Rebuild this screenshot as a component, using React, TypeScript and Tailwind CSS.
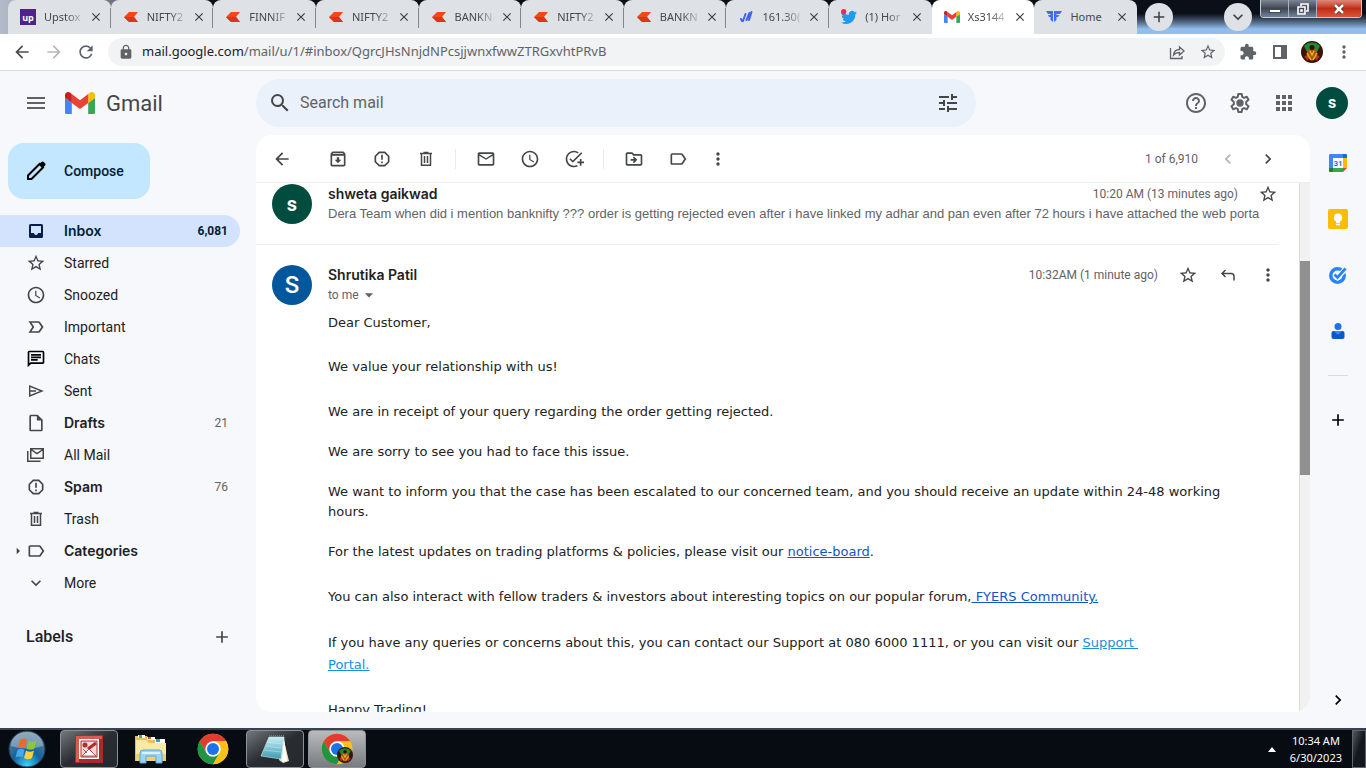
import type { ReactNode } from "react";
import type { IconType } from "react-icons";
import {
  MdAccessTime, MdAdd, MdAddTask, MdApps, MdArrowBack, MdArrowDropDown, MdArrowForward, MdArrowRight,
  MdChevronLeft, MdChevronRight, MdClose, MdExpandMore, MdExtension, MdHelpOutline,
  MdLabelImportantOutline, MdLabelOutline, MdLock, MdMailOutline, MdMenu, MdMoreVert, MdOutlineArchive,
  MdOutlineChat, MdOutlineDriveFileMove, MdOutlineInsertDriveFile, MdRefresh,
  MdReportGmailerrorred, MdSearch, MdStarBorder, MdTune,
} from "react-icons/md";

type IconProps = { className?: string };

/* ---------- brand icons ---------- */

function GmailLogo({ className }: IconProps) {
  return (
    <svg viewBox="52 42 88 66" className={className}>
      <path fill="#4285f4" d="M58 108h14V74L52 59v43c0 3.320 2.690 6 6 6" />
      <path fill="#34a853" d="M120 108h14c3.320 0 6-2.690 6-6V59l-20 15" />
      <path fill="#fbbc04" d="M120 48v26l20-15v-8c0-7.420-8.470-11.650-14.400-7.200" />
      <path fill="#ea4335" d="M72 74V48l24 18 24-18v26L96 92" />
      <path fill="#c5221f" d="M52 51v8l20 15V48l-5.600-4.200c-5.940-4.450-14.400-.22-14.400 7.200" />
    </svg>
  );
}

function UpstoxIcon() {
  return <span className="grid size-4 place-items-center bg-[#512289] font-['Open_Sans',sans-serif] text-[9px] leading-none font-bold text-white">up</span>;
}

function KiteIcon() {
  return (
    <svg viewBox="0 0 16 16" className="size-4">
      <path fill="#f6461a" d="M1 8 6 3h9l-4 5 4 5H6z" />
      <path fill="#d9361a" d="m11 8 4 5H6L1 8z" />
    </svg>
  );
}

function WaveIcon() {
  return (
    <svg viewBox="0 0 16 16" className="size-4" fill="none" stroke="#4263eb" strokeWidth="2" strokeLinecap="round">
      <path d="M3 10l1 2M5 12 7.500 5M8.500 11l3-7M11 11l2.500-8" />
    </svg>
  );
}

function TwitterIcon() {
  return (
    <svg viewBox="0 0 24 24" className="size-4">
      <path fill="#1d9bf0" d="M23.900 5.200c-.9.400-1.800.7-2.800.8 1-.6 1.800-1.600 2.200-2.700-1 .6-2 1-3.100 1.200a4.900 4.900 0 0 0-8.400 4.500C7.700 8.800 4.100 6.900 1.700 3.900a4.900 4.900 0 0 0 1.500 6.600c-.8 0-1.600-.2-2.200-.6a4.900 4.900 0 0 0 3.900 4.900c-.7.200-1.500.2-2.200.1.600 2 2.400 3.400 4.600 3.400A9.900 9.900 0 0 1 0 20.300a14 14 0 0 0 21.500-12.400c1-.7 1.800-1.600 2.400-2.700z" />
      <circle cx="4" cy="4" r="4" fill="#f4245e" />
    </svg>
  );
}

function FyersIcon() {
  return (
    <svg viewBox="0 0 16 16" className="size-4">
      <path fill="#3f6df0" d="M0 2h7v11L4.500 11V8H3L2 6h2.500V5H2zM16 2H8v11l2.500-2V8H12l1.500-2h-3V5H14z" />
    </svg>
  );
}

function ChromeLogo({ className }: IconProps) {
  return (
    <svg viewBox="0 0 48 48" className={className}>
      <circle cx="24" cy="24" r="23" fill="#fbc116" />
      <path fill="#e33b2e" d="M4.100 12.500A23 23 0 0 1 43.900 12.500H24L14 29.800z" />
      <path fill="#229342" d="M4.100 12.500A23 23 0 0 0 24 47l10-17.250H14z" />
      <path fill="#fbc116" d="M43.900 12.500A23 23 0 0 1 24 47l10-17.250a11.500 11.500 0 0 0 0-11.500L24 12.500z" />
      <circle cx="24" cy="24" r="11.500" fill="#fff" />
      <circle cx="24" cy="24" r="9" fill="#1a73e8" />
    </svg>
  );
}

function ProfilePicture({ className }: IconProps) {
  return (
    <svg viewBox="0 0 22 22" className={className}>
      <circle cx="11" cy="11" r="11" fill="#3a1408" />
      <path d="M3 5a11 11 0 0 1 16 0l-3 6H6z" fill="#1f8a2f" />
      <path d="M6 12c.5-4 3-5 5-5s4.500 1 5 5l1 4-6 4-6-4z" fill="#a85a18" />
      <circle cx="11" cy="6.500" r="2.500" fill="#2a1409" />
      <path d="m6 12 4 7M16 12l-4 7M9 10l2 4 2-4" stroke="#f0b41c" strokeWidth="1.400" fill="none" />
      <path d="M4 15l3 4M18 15l-3 4" stroke="#c42a1c" strokeWidth="2" />
    </svg>
  );
}

/* ---------- mail icons ---------- */

function Inbox({ className }: IconProps) {
  return (
    <svg viewBox="0 0 20 20" className={className}>
      <path
        fill="currentColor"
        fillRule="evenodd"
        d="M4.500 3h11A1.500 1.500 0 0 1 17 4.500v11a1.500 1.500 0 0 1-1.500 1.500h-11A1.500 1.500 0 0 1 3 15.500v-11A1.500 1.500 0 0 1 4.500 3M5 5v7h3a2 2 0 0 0 4 0h3V5z"
      />
    </svg>
  );
}

function Trash({ className }: IconProps) {
  return (
    <svg viewBox="0 0 20 20" className={className} fill="none" stroke="currentColor" strokeWidth="1.500">
      <path d="M4 4.500h12M7.500 3.500h5M5.500 4.500v11.750h9V4.500M8.500 7v7M11.500 7v7" />
    </svg>
  );
}

function Send({ className }: IconProps) {
  return (
    <svg viewBox="0 0 20 20" className={className} fill="none" stroke="currentColor" strokeWidth="1.400">
      <path d="M3.700 5v10L16 10zM4 10h6" />
    </svg>
  );
}

function AllMail({ className }: IconProps) {
  return (
    <svg viewBox="0 0 20 20" className={className} fill="none" stroke="currentColor" strokeWidth="1.500">
      <path d="M4.750 3.750h12.500v9.500H4.750zM5 4.500l6 4 6-4M1.750 6v10.250H14.500" />
    </svg>
  );
}

function Reply({ className }: IconProps) {
  return (
    <svg viewBox="0 0 20 20" className={className} fill="none" stroke="currentColor" strokeWidth="1.500">
      <path d="M7.500 5 4 8.500 7.500 12M4.250 8.500H13a3 3 0 0 1 3 3v4" />
    </svg>
  );
}

function Pencil({ className }: IconProps) {
  return (
    <svg viewBox="0 0 24 24" className={className}>
      <path fill="none" stroke="currentColor" strokeWidth="2" d="M4 20v-3.500L15.500 5l3.500 3.500L7.500 20z" />
      <path fill="currentColor" d="m15 5 2.500-2c.7-.7 1.500-.7 2.200 0L21 4.300c.7.700.7 1.500 0 2.200L18.500 9z" />
    </svg>
  );
}

function Gear({ className }: IconProps) {
  return (
    <svg viewBox="0 0 24 24" className={className}>
      <path
        fill="none"
        stroke="currentColor"
        strokeWidth="2"
        strokeLinejoin="round"
        d="M10.300 3h3.400l.5 2.900 1.800 1 2.800-1.100 1.700 3-2.300 1.900v2.600l2.300 1.900-1.700 3-2.800-1.100-1.800 1-.5 2.900h-3.400l-.5-2.900-1.800-1-2.800 1.100-1.700-3 2.300-1.900v-2.600L3.500 8.800l1.700-3L8 6.900l1.800-1z"
      />
      <circle cx="12" cy="12" r="3.700" fill="currentColor" />
    </svg>
  );
}

function CalendarApp() {
  return (
    <svg viewBox="0 0 20 20" className="size-5">
      <path fill="#4285f4" d="M2 1h13v4H5v10H1V2a1 1 0 0 1 1-1" />
      <path fill="#1967d2" d="M15 1h3a1 1 0 0 1 1 1v3h-4z" />
      <path fill="#fbbc04" d="M15 5h4v10h-4z" />
      <path fill="#34a853" d="M5 15h10v4H5z" />
      <path fill="#188038" d="M1 15h4v4H2a1 1 0 0 1-1-1z" />
      <path fill="#ea4335" d="M15 15h4l-4 4z" />
      <path fill="#fff" d="M5 5h10v10H5z" />
      <text x="10" y="13" textAnchor="middle" fontSize="8" fontWeight="700" fontFamily="Roboto" fill="#1a73e8">31</text>
    </svg>
  );
}

function KeepApp() {
  return (
    <svg viewBox="0 0 20 20" className="size-5">
      <rect width="20" height="20" rx="2" fill="#fbbc04" />
      <path fill="#fff" d="M10 4.500a4.200 4.200 0 0 0-2 7.900V14h4v-1.600a4.200 4.200 0 0 0-2-7.900M8 14.800h4v1.400H8z" />
    </svg>
  );
}

function TasksApp() {
  return (
    <svg viewBox="0 0 20 20" className="size-5" fill="none">
      <circle cx="9.500" cy="10.500" r="6.700" stroke="#2684fc" strokeWidth="3.500" />
      <path d="m6.500 9.500 3 3L17.500 4" stroke="#fff" strokeWidth="5" />
      <path d="m6.500 9.500 3 3L17.500 3.500" stroke="#2684fc" strokeWidth="2.800" />
    </svg>
  );
}

function ContactsApp() {
  return (
    <svg viewBox="0 0 20 20" className="size-5">
      <circle cx="10" cy="5.500" r="3.500" fill="#1a73e8" />
      <path fill="#0b57d0" d="M3.500 12a2 2 0 0 1 2-2h9a2 2 0 0 1 2 2v4a2 2 0 0 1-2 2h-9a2 2 0 0 1-2-2z" />
      <path fill="#4285f4" d="M6 10h8l-4 4z" />
    </svg>
  );
}

/* ---------- browser chrome ---------- */

const tabs: { title: string; icon: ReactNode; active?: boolean }[] = [
  { title: "Upstox", icon: <UpstoxIcon /> },
  { title: "NIFTY2", icon: <KiteIcon /> },
  { title: "FINNIF", icon: <KiteIcon /> },
  { title: "NIFTY2", icon: <KiteIcon /> },
  { title: "BANKN", icon: <KiteIcon /> },
  { title: "NIFTY2", icon: <KiteIcon /> },
  { title: "BANKN", icon: <KiteIcon /> },
  { title: "161.30(", icon: <WaveIcon /> },
  { title: "(1) Hor", icon: <TwitterIcon /> },
  { title: "Xs3144", icon: <GmailLogo className="w-4" />, active: true },
  { title: "Home", icon: <FyersIcon /> },
];

function TabStrip() {
  return (
    <div className="flex h-[34px] shrink-0 bg-linear-to-b from-[#0b1018] from-40% to-[#93bdec] to-85%">
      <div className="flex w-[1137px] min-w-0 bg-linear-to-r from-[#b4bccb] via-[#6f7480] via-10% to-[#0b0e13] to-18% pl-2">
        {tabs.map((tab, i) => (
          <div
            key={i}
            className={`relative flex min-w-0 flex-1 items-center rounded-t-lg pl-3 ${tab.active ? "bg-white" : "bg-[#dee1e6]"}`}
          >
            <span className="grid w-4 shrink-0 place-items-center">{tab.icon}</span>
            <span className={`ml-2 w-11 shrink-0 font-['Noto_Sans',sans-serif] text-[11px] whitespace-nowrap text-[#45474a] ${tab.title === "Home" ? "" : "mask-r-from-50% mask-r-to-95%"}`}>
              {tab.title}
            </span>
            <button aria-label="Close tab" className="grid size-4 shrink-0 place-items-center text-[#3c4043]">
              <MdClose className="size-3.5" />
            </button>
            {i < 8 && <span className="absolute top-2 right-0 h-5 w-px bg-[#80858c]" />}
          </div>
        ))}
      </div>
      <div className="flex flex-1 items-start">
        <button aria-label="New tab" className="mt-[3px] ml-2 grid size-7 place-items-center rounded-full bg-[#dee1e6] text-[#3c4043]">
          <MdAdd className="size-4.5" />
        </button>
        <button aria-label="Search tabs" className="mt-[3px] ml-auto grid size-7 place-items-center rounded-full bg-[#dee1e6] text-[#3c4043]">
          <MdExpandMore className="size-5" />
        </button>
        <div className="mr-1 ml-2 flex h-[18px] overflow-hidden rounded-b border border-t-0 border-[#c5ccd6]">
          <button aria-label="Minimize" className="grid w-7 place-items-center border-r border-[#aab2bd] bg-linear-to-b from-[#7d8692] via-[#3d4653] to-[#72859d]">
            <span className="mt-1 h-1 w-3 border border-[#454c56] bg-white" />
          </button>
          <button aria-label="Restore" className="grid w-7 place-items-center border-r border-[#aab2bd] bg-linear-to-b from-[#7d8692] via-[#3d4653] to-[#72859d]">
            <svg viewBox="0 0 12 12" className="size-3" fill="none" stroke="#fff" strokeWidth="1.600">
              <path d="M4 3V1h7v7H9M1 4h7v7H1zM4 7h1v1H4z" />
            </svg>
          </button>
          <button aria-label="Close window" className="grid w-11 place-items-center bg-linear-to-b from-[#dd8878] via-[#bf2b12] to-[#d9563a]">
            <svg viewBox="0 0 12 12" className="size-3" fill="none">
              <path d="m2 2 8 8M10 2l-8 8" stroke="#5a2a22" strokeWidth="4" />
              <path d="m2 2 8 8M10 2l-8 8" stroke="#fff" strokeWidth="2.500" />
            </svg>
          </button>
        </div>
      </div>
    </div>
  );
}

function AddressBar() {
  return (
    <div className="flex h-[37px] shrink-0 items-center border-b border-[#dadce0] bg-white pr-2.5 pl-3 text-[#5f6368]">
      <div className="mr-3 flex gap-3">
        <button aria-label="Back"><MdArrowBack className="size-5 text-[#4a4d51]" /></button>
        <button aria-label="Forward"><MdArrowForward className="size-5 text-[#b5b8bc]" /></button>
        <button aria-label="Reload"><MdRefresh className="size-5" /></button>
      </div>
      <div className="flex h-7 flex-1 items-center rounded-full bg-[#f1f3f4] pr-2 pl-2.5">
        <MdLock className="mr-2 size-4" />
        <span className="flex-1 font-['Noto_Sans',sans-serif] text-[13px]">
          <span className="text-[#202124]">mail.google.com</span>/mail/u/1/#inbox/QgrcJHsNnjdNPcsjjwnxfwwZTRGxvhtPRvB
        </span>
        <button aria-label="Share" className="mr-3">
          <svg viewBox="0 0 20 20" className="size-5" fill="none" stroke="currentColor" strokeWidth="1.300">
            <path d="M3.500 6v10.500H15V14M6.500 13c.5-4 2.500-5.500 6-5.500V5l4.500 4-4.500 4v-2.500c-3 0-4.500.8-6 2.500z" />
          </svg>
        </button>
        <button aria-label="Bookmark"><MdStarBorder className="size-[18px]" /></button>
      </div>
      <div className="ml-[11px] flex gap-2">
        <button aria-label="Extensions" className="grid size-6 place-items-center"><MdExtension className="size-[18px]" /></button>
        <button aria-label="Side panel" className="grid size-6 place-items-center">
          <svg viewBox="0 0 16 16" className="size-4">
            <path fill="none" stroke="currentColor" strokeWidth="2" d="M2 2h12v12H2z" />
            <path fill="currentColor" d="M9 2h5v12H9z" />
          </svg>
        </button>
        <button aria-label="Profile" className="grid size-6 place-items-center"><ProfilePicture className="size-[22px]" /></button>
        <button aria-label="Chrome menu" className="grid size-6 place-items-center"><MdMoreVert className="size-5" /></button>
      </div>
    </div>
  );
}

/* ---------- gmail ---------- */

function Header() {
  return (
    <header className="flex h-16 shrink-0 items-center text-[#5f6368]">
      <div className="flex w-64 shrink-0 items-center pl-6">
        <button aria-label="Main menu"><MdMenu className="size-6" /></button>
        <a href="#inbox" className="ml-[17px] flex items-center gap-[11px]">
          <GmailLogo className="w-[30px]" />
          <span className="text-[22px] text-[#444746]">Gmail</span>
        </a>
      </div>
      <div className="flex h-12 w-[720px] items-center rounded-full bg-[#eaf1fb] px-3 text-[#444746]">
        <button aria-label="Search"><MdSearch className="size-6" /></button>
        <input aria-label="Search mail" placeholder="Search mail" className="ml-2 flex-1 bg-transparent text-base outline-none placeholder:text-[#5f6368]" />
        <button aria-label="Show search options" className="mr-1"><MdTune className="size-6" /></button>
      </div>
      <div className="ml-auto flex items-center gap-5 pr-[18px]">
        <button aria-label="Support"><MdHelpOutline className="size-6" /></button>
        <button aria-label="Settings"><Gear className="size-6" /></button>
        <button aria-label="Google apps"><MdApps className="size-6" /></button>
        <button aria-label="Account" className="grid size-8 place-items-center rounded-full bg-[#004d40] text-base font-bold text-white">s</button>
      </div>
    </header>
  );
}

type NavEntry = { label: string; icon: IconType | typeof Trash; count?: string; bold?: boolean; active?: boolean; dark?: boolean; expandable?: boolean };

const folders: NavEntry[] = [
  { label: "Inbox", icon: Inbox, count: "6,081", bold: true, active: true },
  { label: "Starred", icon: MdStarBorder },
  { label: "Snoozed", icon: MdAccessTime },
  { label: "Important", icon: MdLabelImportantOutline },
  { label: "Chats", icon: MdOutlineChat, dark: true },
  { label: "Sent", icon: Send },
  { label: "Drafts", icon: MdOutlineInsertDriveFile, count: "21", bold: true },
  { label: "All Mail", icon: AllMail },
  { label: "Spam", icon: MdReportGmailerrorred, count: "76", bold: true },
  { label: "Trash", icon: Trash },
  { label: "Categories", icon: MdLabelOutline, bold: true, expandable: true },
  { label: "More", icon: MdExpandMore },
];

function Sidebar() {
  return (
    <aside className="w-64 shrink-0 pt-2 text-sm text-[#202124]">
      <button className="ml-2 flex h-14 w-[142px] items-center gap-4 rounded-2xl bg-[#c2e7ff] pl-4 font-medium text-[#001d35]">
        <Pencil className="size-6 text-black" />
        Compose
      </button>
      <nav className="mt-4 mr-4">
        {folders.map((f) => (
          <a
            key={f.label}
            href={`#${f.label.toLowerCase()}`}
            className={`flex h-8 items-center rounded-r-full pr-3 pl-[26px] ${f.active ? "bg-[#d3e3fd] text-[#001d35]" : ""}`}
          >
            {f.expandable && <MdArrowRight className="-ml-4 size-4 text-[#444746]" />}
            <f.icon className={`size-5 ${f.dark ? "text-black" : f.active ? "text-[#041e49]" : "text-[#444746]"}`} />
            <span className={`ml-[18px] flex-1 ${f.bold ? "font-[Inter,sans-serif] font-semibold" : ""}`}>{f.label}</span>
            <span className={`text-xs ${f.active ? "font-bold" : "text-[#5f6368]"}`}>{f.count}</span>
          </a>
        ))}
      </nav>
      <div className="mt-[26px] mr-6 flex items-center justify-between pl-[26px]">
        <h2 className="text-base font-medium">Labels</h2>
        <button aria-label="Create new label"><MdAdd className="size-5 text-[#444746]" /></button>
      </div>
    </aside>
  );
}

function Divider() {
  return <span className="mr-5 ml-[19px] h-5 w-px bg-[#e8eaed]" />;
}

function Tool({ label, icon: Icon, className = "" }: { label: string; icon: IconType | typeof Trash; className?: string }) {
  return (
    <button aria-label={label} className={className}>
      <Icon className="size-5" />
    </button>
  );
}

function MailToolbar() {
  return (
    <div className="flex h-12 shrink-0 items-center border-b border-[#eceff1] px-4 text-[#444746]">
      <Tool label="Back to inbox" icon={MdArrowBack} className="mr-9" />
      <div className="flex gap-6">
        <Tool label="Archive" icon={MdOutlineArchive} />
        <Tool label="Report spam" icon={MdReportGmailerrorred} />
        <Tool label="Delete" icon={Trash} />
      </div>
      <Divider />
      <div className="flex gap-6">
        <Tool label="Mark as unread" icon={MdMailOutline} />
        <Tool label="Snooze" icon={MdAccessTime} />
        <Tool label="Add to tasks" icon={MdAddTask} />
      </div>
      <Divider />
      <div className="flex gap-6">
        <Tool label="Move to" icon={MdOutlineDriveFileMove} />
        <Tool label="Labels" icon={MdLabelOutline} />
      </div>
      <Tool label="More" icon={MdMoreVert} className="ml-5" />
      <div className="mr-4 ml-auto flex items-center gap-5">
        <span className="text-xs text-[#5f6368]">1 of 6,910</span>
        <Tool label="Newer" icon={MdChevronLeft} className="text-[#b0b3b6]" />
        <Tool label="Older" icon={MdChevronRight} />
      </div>
    </div>
  );
}

function Thread() {
  return (
    <div className="min-w-0 flex-1 overflow-hidden pr-[21px]">
      <article className="flex h-[62px] gap-4 border-b border-[#eceff1] pt-px pl-4">
        <div className="grid size-10 shrink-0 place-items-center rounded-full bg-[#004d40] text-xl font-bold text-white">s</div>
        <div className="min-w-0 flex-1">
          <div className="flex h-5 items-center">
            <h3 className="flex-1 font-[Inter,sans-serif] text-sm font-semibold text-[#1f1f1f]">shweta gaikwad</h3>
            <span className="mr-5 text-xs text-[#5f6368]">10:20 AM (13 minutes ago)</span>
            <button aria-label="Star" className="text-[#444746]"><MdStarBorder className="size-5" /></button>
          </div>
          <p className="font-['Liberation_Sans',sans-serif] text-[13px] leading-5 whitespace-nowrap text-[#5f6368]">
            Dera Team when did i mention banknifty ??? order is getting rejected even after i have linked my adhar and pan even after 72 hours i have attached the web porta
          </p>
        </div>
      </article>
      <article className="flex gap-4 pt-5 pl-4">
        <div className="grid size-10 shrink-0 place-items-center rounded-full bg-[#01579b] text-2xl font-medium text-white">S</div>
        <div className="min-w-0 flex-1">
          <div className="flex h-5 items-center text-[#444746]">
            <h3 className="flex-1 font-[Inter,sans-serif] text-sm font-semibold text-[#1f1f1f]">Shrutika Patil</h3>
            <span className="mr-5 text-xs text-[#5f6368]">10:32AM (1 minute ago)</span>
            <Tool label="Star" icon={MdStarBorder} className="mr-5" />
            <Tool label="Reply" icon={Reply} className="mr-5" />
            <Tool label="More" icon={MdMoreVert} />
          </div>
          <button className="flex h-5 items-center text-xs text-[#5f6368]">
            to me <MdArrowDropDown className="size-5" />
          </button>
          <div className="mt-2 font-['DejaVu_Sans',sans-serif] text-[13px] leading-5 whitespace-nowrap text-[#222]">
            <p>Dear Customer,</p>
            <p className="mt-6">We value your relationship with us!</p>
            <p className="mt-[25px]">We are in receipt of your query regarding the order getting rejected.</p>
            <p className="mt-5">We are sorry to see you had to face this issue.</p>
            <p className="mt-5">
              We want to inform you that the case has been escalated to our concerned team, and you should receive an update within 24-48 working
              <br />
              hours.
            </p>
            <p className="mt-5">
              For the latest updates on trading platforms &amp; policies, please visit our <a href="#notice-board" className="text-[#1155cc] underline">notice-board</a>.
            </p>
            <p className="mt-[25px]">
              You can also interact with fellow traders &amp; investors about interesting topics on our popular forum,
              <a href="#community" className="text-[#1155cc] underline">&nbsp;FYERS Community.</a>
            </p>
            <p className="mt-[25px] leading-[22px]">
              If you have any queries or concerns about this, you can contact our Support at 080 6000 1111, or you can visit our{" "}
              <a href="#support" className="text-[#188fe0] underline">Support&nbsp;<br />Portal.</a>
            </p>
            <p className="mt-6">Happy Trading!</p>
          </div>
        </div>
      </article>
    </div>
  );
}

function SidePanel() {
  return (
    <aside className="flex w-14 shrink-0 flex-col items-center pt-[18px]">
      <div className="flex flex-col gap-9">
        <button aria-label="Calendar"><CalendarApp /></button>
        <button aria-label="Keep"><KeepApp /></button>
        <button aria-label="Tasks"><TasksApp /></button>
        <button aria-label="Contacts"><ContactsApp /></button>
      </div>
      <span className="mt-[34px] h-px w-5 bg-[#dadce0]" />
      <button aria-label="Get add-ons" className="mt-[34px]"><MdAdd className="size-5" /></button>
      <button aria-label="Hide side panel" className="mt-auto mb-[18px]"><MdChevronRight className="size-5" /></button>
    </aside>
  );
}

/* ---------- taskbar ---------- */

function StartOrb() {
  return (
    <svg viewBox="0 0 38 38" className="size-[38px]">
      <defs>
        <radialGradient id="orb" cx="50%" cy="95%" r="90%">
          <stop offset="0" stopColor="#3fd0ff" />
          <stop offset=".45" stopColor="#12639c" />
          <stop offset="1" stopColor="#62839c" />
        </radialGradient>
      </defs>
      <circle cx="19" cy="19" r="18" fill="url(#orb)" stroke="#26394a" />
      <path d="M3 16a16 14 0 0 1 32 0q-16 5-32 0" fill="#fff" opacity=".3" />
      <path d="M12 10q4-3 7 0l-2 8q-4-2-7 0z" fill="#f0682a" />
      <path d="M20.500 10.500q4 2.500 8 0l-2 8q-4 2.500-8 0z" fill="#8cc540" />
      <path d="M9.500 20q3.500-2.500 7 0l-2 7.500q-3.500-2-7 0z" fill="#4aa8e8" />
      <path d="M18 20.500q4 2.500 8 0l-2 7.500q-4 2.500-8 0z" fill="#fdd13a" />
    </svg>
  );
}

function PictureManagerIcon() {
  return (
    <svg viewBox="0 0 28 28" className="size-7">
      <path fill="#a92a2a" d="M0 0h28v28H0z" />
      <path fill="#d85a52" d="M1 1h26v3H1zM1 1h3v26H1z" />
      <path fill="#fff" d="M4 4h20v20H4z" />
      <path fill="#f4d6d2" d="M6 6h16v16H6z" />
      <path stroke="#b32d2d" strokeWidth="1" fill="none" d="M6 6h16v16H6z" />
      <circle cx="10" cy="10" r="2.500" fill="#b32d2d" />
      <path stroke="#b32d2d" strokeWidth="3" d="m13 14 8-6" />
      <path fill="#fff" stroke="#b32d2d" strokeWidth=".8" d="m7 21 7-7 7 7zM8 14l4 4" />
    </svg>
  );
}

function ExplorerIcon() {
  return (
    <svg viewBox="0 0 34 32" className="h-8 w-[34px]">
      <path fill="#e2c163" d="M1 3h12l2 3h15v4h2v18H1z" />
      <path fill="#fff" d="M4 2h7v3H4zM13 4h8v3h-8zM21 6h10v4H21z" />
      <path fill="#4caf50" d="M5 2h3v3H5z" />
      <path fill="#d9513c" d="M14 4h3v2h-3z" />
      <path fill="#3b98d8" d="M22 6h4v3h-4z" />
      <path fill="#fae9a4" d="M2 7h10l3 3h17v18H2z" />
      <path fill="#e9d07b" d="M2 21h30v7H2z" />
      <path fill="#9bd5f4" stroke="#5aa7d6" d="M6 30V20q0-3 3-3h16q3 0 3 3v10h-6v-7H12v7z" />
      <path fill="#d8f2ff" d="M8 19h18v2H8z" />
    </svg>
  );
}

function NotepadIcon() {
  return (
    <svg viewBox="0 0 32 30" className="h-[30px] w-8">
      <defs>
        <linearGradient id="pad" x1="0" y1="0" x2="0" y2="1">
          <stop offset="0" stopColor="#c9eef4" />
          <stop offset="1" stopColor="#3a9bb0" />
        </linearGradient>
      </defs>
      <path fill="#e8e2c8" d="m24 3 6 24-6 2-4-3z" />
      <path fill="#fff" d="m25 3 3 24-5 1z" />
      <path fill="url(#pad)" stroke="#d5ecef" strokeWidth=".6" d="M10 3h15l-3 22-20-3z" />
      <path stroke="#6d7c80" strokeDasharray="1 1" strokeWidth="2" d="M10 2h15" />
      <path stroke="#e6fbff" strokeWidth=".6" opacity=".6" d="m8 8 15 2M7 12l15 2M5 16l17 2" />
    </svg>
  );
}

function Taskbar() {
  const windowClass = "grid h-[38px] w-[58px] place-items-center rounded-sm border border-[#8d9196]";
  return (
    <footer className="flex h-10 shrink-0 items-center border-t-2 border-[#39434f] bg-[#070c12] pl-2 font-['Noto_Sans',sans-serif]">
      <button aria-label="Start"><StartOrb /></button>
      <button aria-label="Picture Manager" className={`ml-3.5 ${windowClass} bg-linear-to-br from-[#75787c] via-[#292d31] to-[#25292d]`}><PictureManagerIcon /></button>
      <button aria-label="Explorer" className="ml-4"><ExplorerIcon /></button>
      <button aria-label="Chrome" className="ml-[29px]"><ChromeLogo className="size-8" /></button>
      <button aria-label="Notepad" className={`ml-[17px] ${windowClass} bg-linear-to-br from-[#75787c] via-[#292d31] to-[#25292d]`}><NotepadIcon /></button>
      <button aria-label="Chrome window" className={`relative ml-1 ${windowClass} bg-linear-to-b from-[#b9bbbd] to-[#797c7f]`}>
        <ChromeLogo className="size-8" />
        <ProfilePicture className="absolute right-3 bottom-1 size-4" />
      </button>
      <button aria-label="Show hidden icons" className="ml-auto text-white">
        <svg viewBox="0 0 8 5" className="h-[5px] w-2"><path fill="currentColor" d="M4 0l4 5H0z" /></svg>
      </button>
      <div className="ml-3.5 text-center text-[11px] leading-[17px] text-white">
        <div>10:34 AM</div>
        <div>6/30/2023</div>
      </div>
      <button aria-label="Show desktop" className="ml-2.5 h-full w-3.5 border border-[#5d646c] bg-linear-to-br from-[#555b62] to-[#14181d] to-50%" />
    </footer>
  );
}

export default function App() {
  return (
    <div className="flex h-screen flex-col overflow-hidden bg-[#f6f8fc] font-[Roboto,sans-serif]">
      <TabStrip />
      <AddressBar />
      <Header />
      <div className="flex min-h-0 flex-1">
        <Sidebar />
        <main className="mb-4 flex min-w-0 flex-1 flex-col overflow-hidden rounded-2xl bg-white">
          <MailToolbar />
          <div className="flex min-h-0 flex-1">
            <Thread />
            <div className="w-[11px] shrink-0 border-l border-[#dcdcdc] bg-[#f1f1f1] pt-[78px]">
              <div className="h-[214px] bg-[#909090]" />
            </div>
          </div>
        </main>
        <SidePanel />
      </div>
      <Taskbar />
    </div>
  );
}
